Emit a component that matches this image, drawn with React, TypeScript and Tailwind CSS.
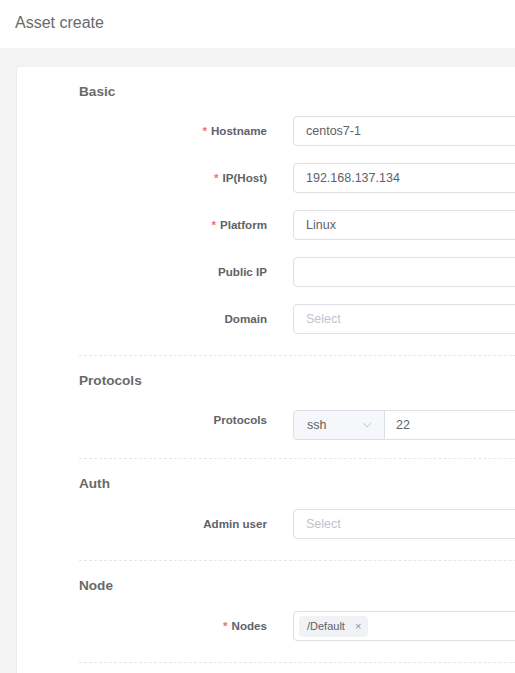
import React from "react";

const Star = () => <span className="text-[#f56c6c] mr-[4px]">*</span>;

function Row({
  label,
  required,
  top,
  children,
}: {
  label: string;
  required?: boolean;
  top?: boolean;
  children: React.ReactNode;
}) {
  return (
    <div className={`flex h-[30px] ${top ? "items-start" : "items-center"}`}>
      <div
        className={`w-[188px] text-right text-[11.6px] font-bold text-[#606266] leading-none ${
          top ? "h-5 flex items-center justify-end" : ""
        }`}
      >
        {required && <Star />}
        {label}
      </div>
      <div className="ml-[26px] flex">{children}</div>
    </div>
  );
}

function Input({ value, placeholder }: { value?: string; placeholder?: string }) {
  return (
    <div className="w-[420px] h-[30px] border border-[#dcdfe6] rounded-[4px] bg-white flex items-center px-[12px] text-[12.5px]">
      {value ? (
        <span className="text-[#606266]">{value}</span>
      ) : (
        <span className="text-[#c0c4cc]">{placeholder}</span>
      )}
    </div>
  );
}

function Heading({ children, mb }: { children: React.ReactNode; mb: string }) {
  return (
    <div className={`h-5 flex items-center text-[13.6px] font-bold text-[#676a6c] ${mb}`}>{children}</div>
  );
}

const Divider = () => <div className="border-t border-dashed border-[#e4e7ed]" />;

export default function App() {
  return (
    <div
      className="w-[515px] h-[673px] overflow-hidden bg-[#f3f3f4]"
      style={{ fontFamily: '"Liberation Sans", Arial, Helvetica, sans-serif' }}
    >
      <div className="h-12 bg-white flex items-start pt-[11px] px-[15px]">
        <span className="text-[16px] leading-6 text-[#676a6c]">Asset create</span>
      </div>
      <div className="pl-4 pt-[19px]">
        <div className="w-[900px] h-[700px] bg-white rounded-[4px] border-l border-[#ebebeb] pl-[62px] pt-[15px]">
          <Heading mb="mb-[14px]">Basic</Heading>
          <div className="flex flex-col gap-[17px]">
            <Row label="Hostname" required>
              <Input value="centos7-1" />
            </Row>
            <Row label="IP(Host)" required>
              <Input value="192.168.137.134" />
            </Row>
            <Row label="Platform" required>
              <Input value="Linux" />
            </Row>
            <Row label="Public IP">
              <Input />
            </Row>
            <Row label="Domain">
              <Input placeholder="Select" />
            </Row>
          </div>
          <div className="h-[21px]" />
          <Divider />

          <div className="pt-[15px]">
            <Heading mb="mb-[19px]">Protocols</Heading>
            <Row label="Protocols" top>
              <div className="flex h-[30px]">
                <div className="w-[92px] h-[30px] border border-[#dcdfe6] rounded-l-[4px] bg-[#f5f7fa] flex items-center pl-[13px] pr-[12px] justify-between text-[12.5px] text-[#606266]">
                  <span>ssh</span>
                  <svg width="10" height="6" viewBox="0 0 10 6" fill="none">
                    <path d="M1 1l4 4 4-4" stroke="#c0c4cc" strokeWidth="1" />
                  </svg>
                </div>
                <div className="w-[330px] h-[30px] border border-l-0 border-[#dcdfe6] bg-white flex items-center px-[11px] text-[12.5px] text-[#606266]">
                  22
                </div>
              </div>
            </Row>
          </div>
          <div className="h-[18px]" />
          <Divider />

          <div className="pt-[15px]">
            <Heading mb="mb-[15px]">Auth</Heading>
            <Row label="Admin user">
              <Input placeholder="Select" />
            </Row>
          </div>
          <div className="h-[21px]" />
          <Divider />

          <div className="pt-[15px]">
            <Heading mb="mb-[15px]">Node</Heading>
            <Row label="Nodes" required>
              <div className="w-[420px] h-[30px] border border-[#dcdfe6] rounded-[4px] bg-white flex items-center pl-[5px]">
                <div className="h-[21px] bg-[#f0f2f5] rounded-[4px] flex items-center pl-[8px] pr-[7px] text-[11px] text-[#606266]">
                  <span>/Default</span>
                  <span className="ml-[10px] text-[#909399] text-[11px]">×</span>
                </div>
              </div>
            </Row>
          </div>
          <div className="h-[21px]" />
          <Divider />
        </div>
      </div>
    </div>
  );
}
